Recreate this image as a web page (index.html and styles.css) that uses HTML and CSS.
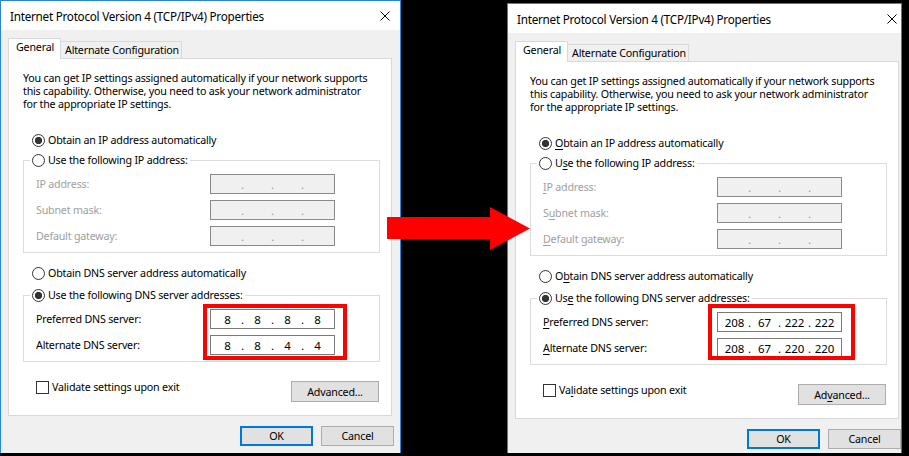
FILE: index.html
```html
<!DOCTYPE html>
<html>
<head lang="en">
    <meta charset="UTF-8">
    <title>TCP/IPv4 Properties - DNS</title>
    <link rel="stylesheet" href="styles.css">
</head>
<body>
<div class="stage">
    <!-- before -->
    <div class="dlg dlg-left">
        <div class="titlebar">
            <span class="title">Internet Protocol Version 4 (TCP/IPv4) Properties</span>
            <svg class="close" width="10" height="10" viewBox="0 0 10 10"><path d="M0.5 0.5L9.5 9.5M9.5 0.5L0.5 9.5" stroke="#000" stroke-width="1"/></svg>
        </div>
        <div class="body">
            <div class="tabs">
                <span class="tab current">General</span>
                <span class="tab">Alternate Configuration</span>
            </div>
            <div class="panel">
                <p class="intro">You can get IP settings assigned automatically if your network supports<br>this capability. Otherwise, you need to ask your network administrator<br>for the appropriate IP settings.</p>
                <div class="opt first"><i class="rb on"></i>Obtain an IP address automatically</div>
                <fieldset class="group">
                    <legend class="opt"><i class="rb"></i>Use the following IP address:</legend>
                    <div class="row off"><span class="lbl">IP address:</span><span class="ip"><b></b><em>.</em><b></b><em>.</em><b></b><em>.</em><b></b></span></div>
                    <div class="row off"><span class="lbl">Subnet mask:</span><span class="ip"><b></b><em>.</em><b></b><em>.</em><b></b><em>.</em><b></b></span></div>
                    <div class="row off"><span class="lbl">Default gateway:</span><span class="ip"><b></b><em>.</em><b></b><em>.</em><b></b><em>.</em><b></b></span></div>
                </fieldset>
                <div class="opt dns"><i class="rb"></i>Obtain DNS server address automatically</div>
                <fieldset class="group group-dns">
                    <legend class="opt"><i class="rb on"></i>Use the following DNS server addresses:</legend>
                    <div class="row"><span class="lbl">Preferred DNS server:</span><span class="ip"><b>8</b><em>.</em><b>8</b><em>.</em><b>8</b><em>.</em><b>8</b></span></div>
                    <div class="row"><span class="lbl">Alternate DNS server:</span><span class="ip"><b>8</b><em>.</em><b>8</b><em>.</em><b>4</b><em>.</em><b>4</b></span></div>
                </fieldset>
                <div class="foot">
                    <span class="check"><i class="cb"></i>Validate settings upon exit</span>
                    <span class="btn adv">Advanced...</span>
                </div>
            </div>
            <div class="buttons">
                <span class="btn default">OK</span>
                <span class="btn">Cancel</span>
            </div>
        </div>
    </div>

    <!-- after -->
    <div class="dlg dlg-right">
        <div class="titlebar">
            <span class="title">Internet Protocol Version 4 (TCP/IPv4) Properties</span>
            <svg class="close" width="10" height="10" viewBox="0 0 10 10"><path d="M0.5 0.5L9.5 9.5M9.5 0.5L0.5 9.5" stroke="#000" stroke-width="1"/></svg>
        </div>
        <div class="body">
            <div class="tabs">
                <span class="tab current">General</span>
                <span class="tab">Alternate Configuration</span>
            </div>
            <div class="panel">
                <p class="intro">You can get IP settings assigned automatically if your network supports<br>this capability. Otherwise, you need to ask your network administrator<br>for the appropriate IP settings.</p>
                <div class="opt first"><i class="rb on"></i><span><u>O</u>btain an IP address automatically</span></div>
                <fieldset class="group">
                    <legend class="opt"><i class="rb"></i><span>U<u>s</u>e the following IP address:</span></legend>
                    <div class="row off"><span class="lbl"><u>I</u>P address:</span><span class="ip"><b></b><em>.</em><b></b><em>.</em><b></b><em>.</em><b></b></span></div>
                    <div class="row off"><span class="lbl">S<u>u</u>bnet mask:</span><span class="ip"><b></b><em>.</em><b></b><em>.</em><b></b><em>.</em><b></b></span></div>
                    <div class="row off"><span class="lbl"><u>D</u>efault gateway:</span><span class="ip"><b></b><em>.</em><b></b><em>.</em><b></b><em>.</em><b></b></span></div>
                </fieldset>
                <div class="opt dns"><i class="rb"></i><span>O<u>b</u>tain DNS server address automatically</span></div>
                <fieldset class="group group-dns">
                    <legend class="opt"><i class="rb on"></i><span>Us<u>e</u> the following DNS server addresses:</span></legend>
                    <div class="row"><span class="lbl"><u>P</u>referred DNS server:</span><span class="ip"><b>208</b><em>.</em><b>67</b><em>.</em><b>222</b><em>.</em><b>222</b></span></div>
                    <div class="row"><span class="lbl"><u>A</u>lternate DNS server:</span><span class="ip"><b>208</b><em>.</em><b>67</b><em>.</em><b>220</b><em>.</em><b>220</b></span></div>
                </fieldset>
                <div class="foot">
                    <span class="check"><i class="cb"></i><span>Va<u>l</u>idate settings upon exit</span></span>
                    <span class="btn adv">Ad<u>v</u>anced...</span>
                </div>
            </div>
            <div class="buttons">
                <span class="btn default">OK</span>
                <span class="btn">Cancel</span>
            </div>
        </div>
    </div>

    <!-- annotations -->
    <span class="mark mark-left"></span>
    <span class="mark mark-right"></span>
    <svg class="arrow" width="150" height="50" viewBox="0 0 150 50">
        <path d="M2 12 L105 12 L105 2 L145 23.5 L105 45 L105 34 L2 34 Z" fill="#ff0000"/>
    </svg>
</div>
</body>
</html>
```

FILE: styles.css
```css
* {
    margin: 0;
    padding: 0;
    box-sizing: border-box;
}

body {
    width: 909px;
    height: 456px;
    overflow: hidden;
    background: #000;
    font-family: "Noto Sans", "Open Sans", sans-serif;
    font-size: 10.7px;
    letter-spacing: -0.2px;
    color: #000;
}

.stage {
    position: relative;
    display: flex;
    align-items: flex-start;
    height: 456px;
}

u {
    text-decoration: underline;
    text-underline-offset: 2px;
}

/* window */
.dlg {
    display: flex;
    flex-direction: column;
    flex-shrink: 0;
    overflow: hidden;
    background: #f0f0f0;
    border: 1px solid #2b84d6;
    border-bottom: 0;
}

.dlg-left {
    width: 401px;
    height: 453px;
}

.dlg-right {
    width: 395px;
    height: 450px;
    margin-left: 106px;
    margin-top: 3px;
}

.titlebar {
    display: flex;
    align-items: center;
    height: 29px;
    padding-left: 9px;
    background: #fff;
    flex-shrink: 0;
}

.title {
    width: 370px;
    font-size: 11.7px;
    letter-spacing: -0.25px;
    white-space: nowrap;
}

.close {
    display: block;
    flex-shrink: 0;
}

.body {
    padding: 8px 0 0 7px;
}

/* tabs */
.tabs {
    display: flex;
    align-items: flex-start;
    height: 21px;
    margin-bottom: -1px;
    position: relative;
    z-index: 1;
}

.tab {
    height: 17px;
    width: 121px;
    margin-top: 3px;
    padding: 1px 0 0 4px;
    line-height: 15px;
    border: 1px solid #d9d9d9;
    border-bottom: 0;
    border-left: 0;
    white-space: nowrap;
}

.tab.current {
    height: 21px;
    width: 53px;
    margin-top: 0;
    padding-left: 7px;
    background: #fff;
    border-left: 1px solid #d9d9d9;
}

.panel {
    width: 384px;
    height: 358px;
    padding: 13px 11px 0 14px;
    background: #fff;
    border: 1px solid #d9d9d9;
}

.intro {
    line-height: 13px;
    white-space: nowrap;
}

/* radio / check */
.opt {
    display: flex;
    align-items: center;
    gap: 3px;
    height: 16px;
    margin-left: 9px;
    white-space: nowrap;
}

.opt.first {
    margin-top: 21px;
}

.opt.dns {
    margin-top: 12px;
}

.rb {
    width: 13px;
    height: 13px;
    border: 1px solid #333;
    border-radius: 50%;
    background: #fff;
    flex-shrink: 0;
}

.rb.on {
    background: radial-gradient(circle, #333 0 3.3px, #fff 4px);
}

.group {
    width: 357px;
    min-width: 0;
    margin-top: 4px;
    padding: 6px 0 6px 12px;
    border: 1px solid #dcdcdc;
}

.group-dns {
    margin-top: 6px;
}

.group legend.opt {
    margin-left: -6px;
    padding: 0 2px;
}

.row {
    display: flex;
    align-items: center;
    height: 20px;
    margin-top: 6px;
}

.row:first-of-type {
    margin-top: 0;
}

.lbl {
    width: 174px;
    flex-shrink: 0;
}

.row.off .lbl {
    color: #a0a0a0;
}

.ip {
    display: flex;
    align-items: center;
    width: 125px;
    height: 20px;
    padding-left: 4px;
    border: 1px solid #7a7a7a;
    background: #fff;
    font-size: 11.5px;
    letter-spacing: 0;
}

.ip b {
    width: 25px;
    font-weight: normal;
    text-align: center;
}

.ip em {
    width: 5px;
    font-style: normal;
    text-align: center;
}

.row.off .ip {
    background: #f0f0f0;
    border-color: #8a8a8a;
}

.row.off .ip em {
    color: #8a9ab0;
}

.foot {
    display: flex;
    justify-content: space-between;
    align-items: flex-start;
    width: 357px;
    margin-top: 18px;
}

.check {
    display: flex;
    align-items: center;
    gap: 3px;
    margin-left: 13px;
}

.cb {
    width: 13px;
    height: 13px;
    border: 1px solid #333;
    background: #fff;
}

/* buttons */
.btn {
    display: flex;
    align-items: center;
    justify-content: center;
    width: 73px;
    height: 20px;
    background: #e1e1e1;
    border: 1px solid #adadad;
    white-space: nowrap;
}

.btn.adv {
    width: 88px;
    height: 21px;
    margin-top: 1px;
    margin-right: 1px;
}

.btn.default {
    border: 2px solid #0078d7;
}

.buttons {
    display: flex;
    justify-content: flex-end;
    gap: 8px;
    width: 386px;
    margin-top: 10px;
}

/* annotations drawn over the screenshots */
.mark {
    position: absolute;
    top: 304px;
    height: 56px;
    border: 4px solid #ff0000;
}

.mark-left {
    left: 203px;
    width: 144px;
}

.mark-right {
    left: 708px;
    width: 147px;
}

.arrow {
    position: absolute;
    left: 385px;
    top: 205px;
}
```
